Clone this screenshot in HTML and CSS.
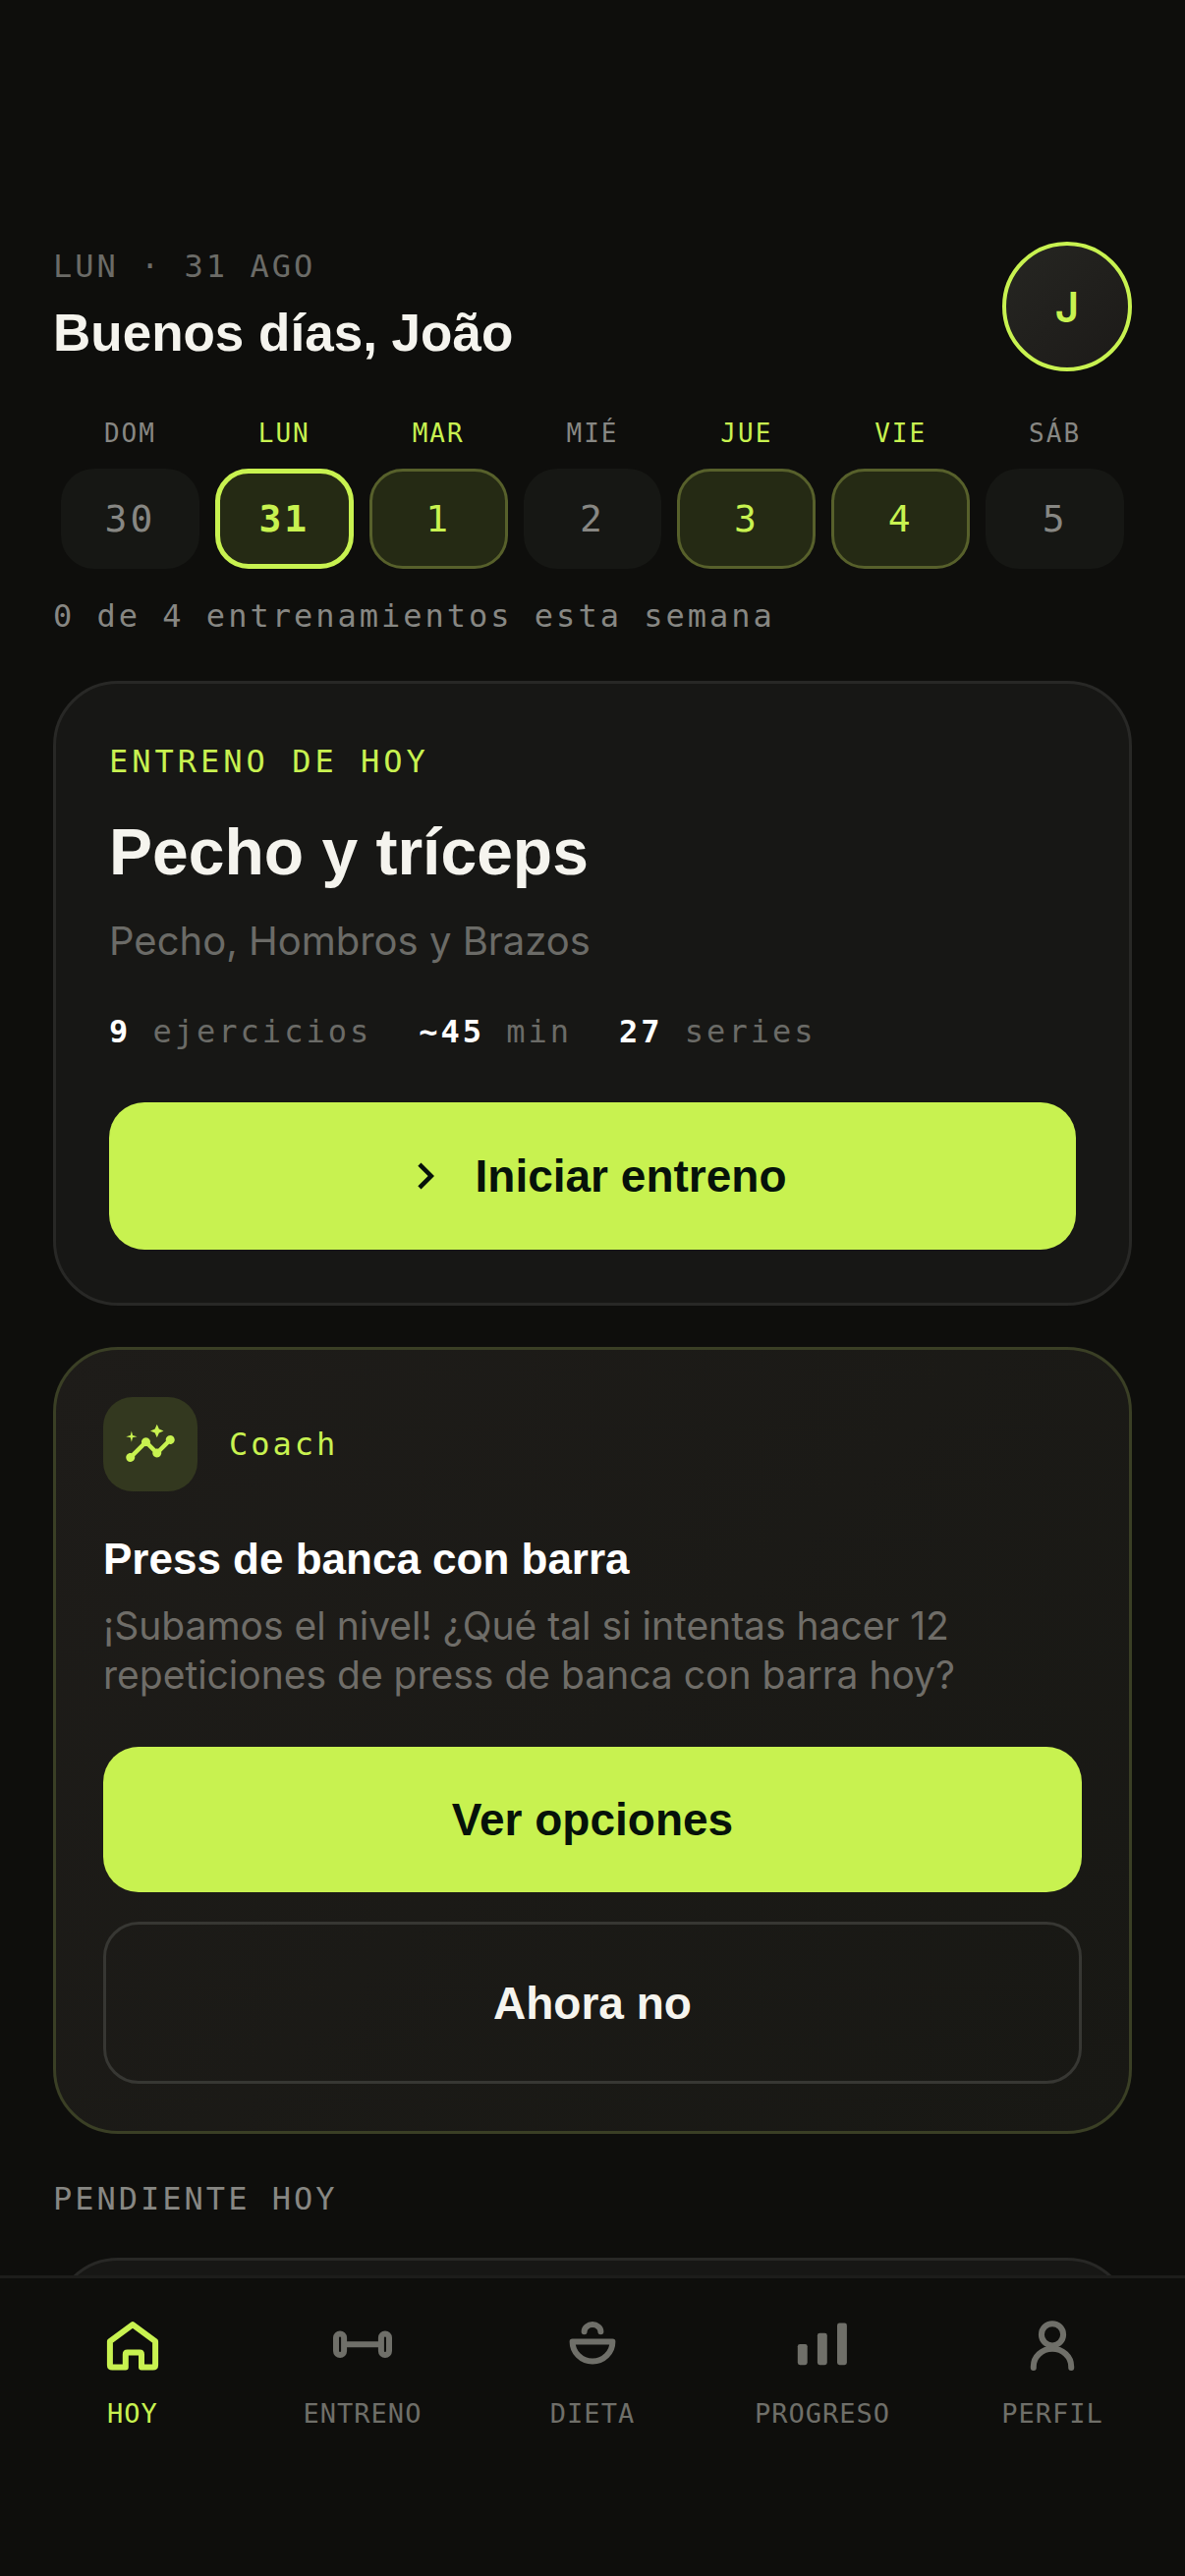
FILE: index.html
```html
<!DOCTYPE html>
<html lang="es">
<head>
    <meta charset="UTF-8">
    <meta name="viewport" content="width=device-width, initial-scale=1">
    <title>Hoy</title>
    <link rel="stylesheet" href="styles.css">
</head>
<body>
    <main class="screen">
        <header class="header">
            <div>
                <p class="mono date">LUN · 31 AGO</p>
                <h1>Buenos días, João</h1>
            </div>
            <button class="avatar" type="button" aria-label="Perfil de João">J</button>
        </header>

        <ol class="week">
            <li class="day"><span class="day-name">DOM</span><span class="day-num">30</span></li>
            <li class="day planned today"><span class="day-name">LUN</span><span class="day-num">31</span></li>
            <li class="day planned"><span class="day-name">MAR</span><span class="day-num">1</span></li>
            <li class="day"><span class="day-name">MIÉ</span><span class="day-num">2</span></li>
            <li class="day planned"><span class="day-name">JUE</span><span class="day-num">3</span></li>
            <li class="day planned"><span class="day-name">VIE</span><span class="day-num">4</span></li>
            <li class="day"><span class="day-name">SÁB</span><span class="day-num">5</span></li>
        </ol>
        <p class="mono week-summary">0 de 4 entrenamientos esta semana</p>

        <section class="card workout">
            <p class="mono eyebrow">ENTRENO DE HOY</p>
            <h2>Pecho y tríceps</h2>
            <p class="muscles">Pecho, Hombros y Brazos</p>
            <ul class="mono stats">
                <li><b>9</b> ejercicios</li>
                <li><b>~45</b> min</li>
                <li><b>27</b> series</li>
            </ul>
            <button class="btn btn-start" type="button">
                <svg viewBox="0 0 24 24" aria-hidden="true"><path d="M10 6 8.59 7.41 13.17 12l-4.58 4.59L10 18l6-6z"/></svg>
                Iniciar entreno
            </button>
        </section>

        <section class="card coach">
            <div class="coach-head">
                <span class="coach-icon">
                    <svg viewBox="0 0 24 24" aria-hidden="true">
                        <path d="M21 8c-1.45 0-2.26 1.44-1.93 2.51l-3.55 3.56c-.3-.09-.74-.09-1.04 0l-2.55-2.55C12.27 10.45 11.46 9 10 9c-1.45 0-2.27 1.44-1.93 2.52l-4.56 4.55C2.44 15.74 1 16.55 1 18c0 1.1.9 2 2 2 1.45 0 2.26-1.44 1.93-2.51l4.55-4.56c.3.09.74.09 1.04 0l2.55 2.55C12.73 16.55 13.54 18 15 18c1.45 0 2.27-1.44 1.93-2.52l3.56-3.55C21.56 12.26 23 11.45 23 10c0-1.1-.9-2-2-2z"/>
                        <path d="m15 9 .94-2.07L18 6l-2.06-.93L15 3l-.92 2.07L12 6l2.08.93zM3.5 11 4 9l2-.5L4 8l-.5-2L3 8l-2 .5L3 9z"/>
                    </svg>
                </span>
                <p class="mono">Coach</p>
            </div>
            <h3>Press de banca con barra</h3>
            <p class="coach-text">¡Subamos el nivel! ¿Qué tal si intentas hacer 12 repeticiones de press de banca con barra hoy?</p>
            <button class="btn" type="button">Ver opciones</button>
            <button class="btn btn-outline" type="button">Ahora no</button>
        </section>

        <h2 class="mono section-title">PENDIENTE HOY</h2>
        <section class="card pending"></section>
    </main>

    <nav class="tabbar">
        <a class="tab active" href="#hoy">
            <svg viewBox="0 0 22 22" aria-hidden="true"><path d="M3.3 9.4 11 3.7l7.7 5.7v8q0 .8-.8.8h-3.9v-4.4q0-.6-.6-.6H9.2q-.6 0-.6.6v4.4H4.1q-.8 0-.8-.8z"/></svg>
            HOY
        </a>
        <a class="tab" href="#entreno">
            <svg viewBox="0 0 22 22" aria-hidden="true"><rect x="2" y="6.8" width="2.7" height="7.2" rx="1.35"/><rect x="17.3" y="6.8" width="2.7" height="7.2" rx="1.35"/><path d="M5 10.4h12"/></svg>
            ENTRENO
        </a>
        <a class="tab" href="#dieta">
            <svg viewBox="0 0 22 22" aria-hidden="true"><path d="M4.2 9.5h13.6a6.8 6.7 0 0 1-13.6 0zM8.2 6.1a2.8 2.4 0 0 1 5.6 0"/></svg>
            DIETA
        </a>
        <a class="tab" href="#progreso">
            <svg class="filled" viewBox="0 0 22 22" aria-hidden="true"><rect x="2.6" y="10.3" width="3.3" height="7.1" rx=".8"/><rect x="9.3" y="6.6" width="3.3" height="10.8" rx=".8"/><rect x="16" y="3.2" width="3.3" height="14.2" rx=".8"/></svg>
            PROGRESO
        </a>
        <a class="tab" href="#perfil">
            <svg viewBox="0 0 22 22" aria-hidden="true"><circle cx="11" cy="7.1" r="3.7"/><path d="M4.6 18.3v-.4a6.4 6 0 0 1 12.8 0v.4"/></svg>
            PERFIL
        </a>
    </nav>
</body>
</html>
```
FILE: styles.css
```css
:root {
    --bg: #0e0e0c; --card: #171715; --lime: #c8f250; --white: #f5f4ee;
    --gray: #878783; --gray-dark: #6b6b67; --border: #282826;
    --mono: "DejaVu Sans Mono", monospace;
    --display: "Liberation Sans", Arial, sans-serif;
    --text: Inter, sans-serif;
}

* { box-sizing: border-box; }
body { margin: 0; height: 100vh; overflow: hidden; display: flex; flex-direction: column; background: var(--bg); color: var(--white); font-family: var(--text); }
h1, h2, h3, p, ul, ol { margin: 0; padding: 0; }
ul, ol { list-style: none; }
button { font-family: inherit; cursor: pointer; }

.mono { font-family: var(--mono); font-size: 32px; line-height: 44px; letter-spacing: 3px; font-weight: 400; }

.screen { flex: 1; min-height: 0; overflow: hidden; padding: 246px 54px 0; }

.header { display: flex; justify-content: space-between; align-items: center; height: 132px; }
.date { color: var(--gray-dark); }
.header h1 { font-family: var(--display); font-size: 53px; line-height: 68px; margin-top: 12px; padding-bottom: 2px; }
.avatar { width: 132px; height: 132px; border: 4px solid var(--lime); border-radius: 50%; background: linear-gradient(135deg, #262622, #1c1a18); color: var(--lime); font-size: 42px; font-weight: 600; }

.week { display: grid; grid-template-columns: repeat(7, 1fr); margin-top: 45px; }
.day { display: flex; flex-direction: column; gap: 18px; padding: 0 8px; text-align: center; font-family: var(--mono); color: var(--gray); }
.day-name { font-size: 26px; line-height: 36px; letter-spacing: 2px; }
.day-num { display: flex; align-items: center; justify-content: center; height: 102px; border-radius: 34px; background: #161714; font-size: 38px; letter-spacing: 3px; }
.planned { color: var(--lime); }
.planned .day-num { border: 3px solid #57602b; background: #252a14; }
.today .day-num { border: 5px solid var(--lime); font-weight: 700; }
.week-summary { margin-top: 26px; color: var(--gray); }

.card { border: 3px solid var(--border); border-radius: 66px; background: var(--card); }
.workout { margin-top: 44px; padding: 54px; }
.eyebrow { padding-top: 3px; color: var(--lime); letter-spacing: 4px; }
.workout h2 { font-family: var(--display); font-size: 66px; line-height: 76px; margin-top: 32px; }
.muscles { margin-top: 28px; font-size: 40px; line-height: 50px; color: var(--gray-dark); }
.stats { display: flex; gap: 48px; margin: 45px 0 50px; color: var(--gray-dark); }
.stats b { color: #fff; }

.btn { display: flex; align-items: center; justify-content: center; gap: 24px; width: 100%; height: 148px; border: 0; border-radius: 36px; background: var(--lime); color: #06120a; font-family: var(--display); font-size: 46px; font-weight: 700; }
.btn svg { width: 54px; height: 54px; fill: currentColor; }
.btn-start { height: 150px; }
.btn-outline { height: 165px; margin-top: 30px; border: 3px solid #373733; background: none; color: var(--white); }

.coach { margin-top: 42px; padding: 48px; border-color: #3a3f25; background: linear-gradient(135deg, #1e1c19, #181814); }
.coach-head { display: flex; align-items: center; gap: 32px; color: var(--lime); }
.coach-icon { display: flex; align-items: center; justify-content: center; width: 96px; height: 96px; border-radius: 30px; background: #33381f; }
.coach-icon svg { width: 54px; height: 54px; fill: currentColor; }
.coach h3 { margin-top: 42px; font-family: var(--display); font-size: 44px; line-height: 54px; color: #fff; }
.coach-text { margin: 16px 0 48px; font-size: 39px; line-height: 50px; color: #6f6d68; }

.section-title { margin-top: 44px; color: var(--gray); }
.pending { height: 240px; margin-top: 38px; }

.tabbar { display: grid; grid-template-columns: repeat(5, 1fr); height: 306px; padding: 36px 18px 0; border-top: 3px solid #1d1d1b; background: var(--bg); }
.tab { display: flex; flex-direction: column; align-items: center; gap: 18px; font-family: var(--mono); font-size: 27px; line-height: 36px; letter-spacing: 1px; color: #6f6f69; text-decoration: none; }
.tab.active { color: var(--lime); }
.tab svg { width: 66px; height: 66px; fill: none; stroke: currentColor; stroke-width: 2; stroke-linecap: round; stroke-linejoin: round; }
.tab svg.filled { fill: currentColor; stroke: none; }
```
